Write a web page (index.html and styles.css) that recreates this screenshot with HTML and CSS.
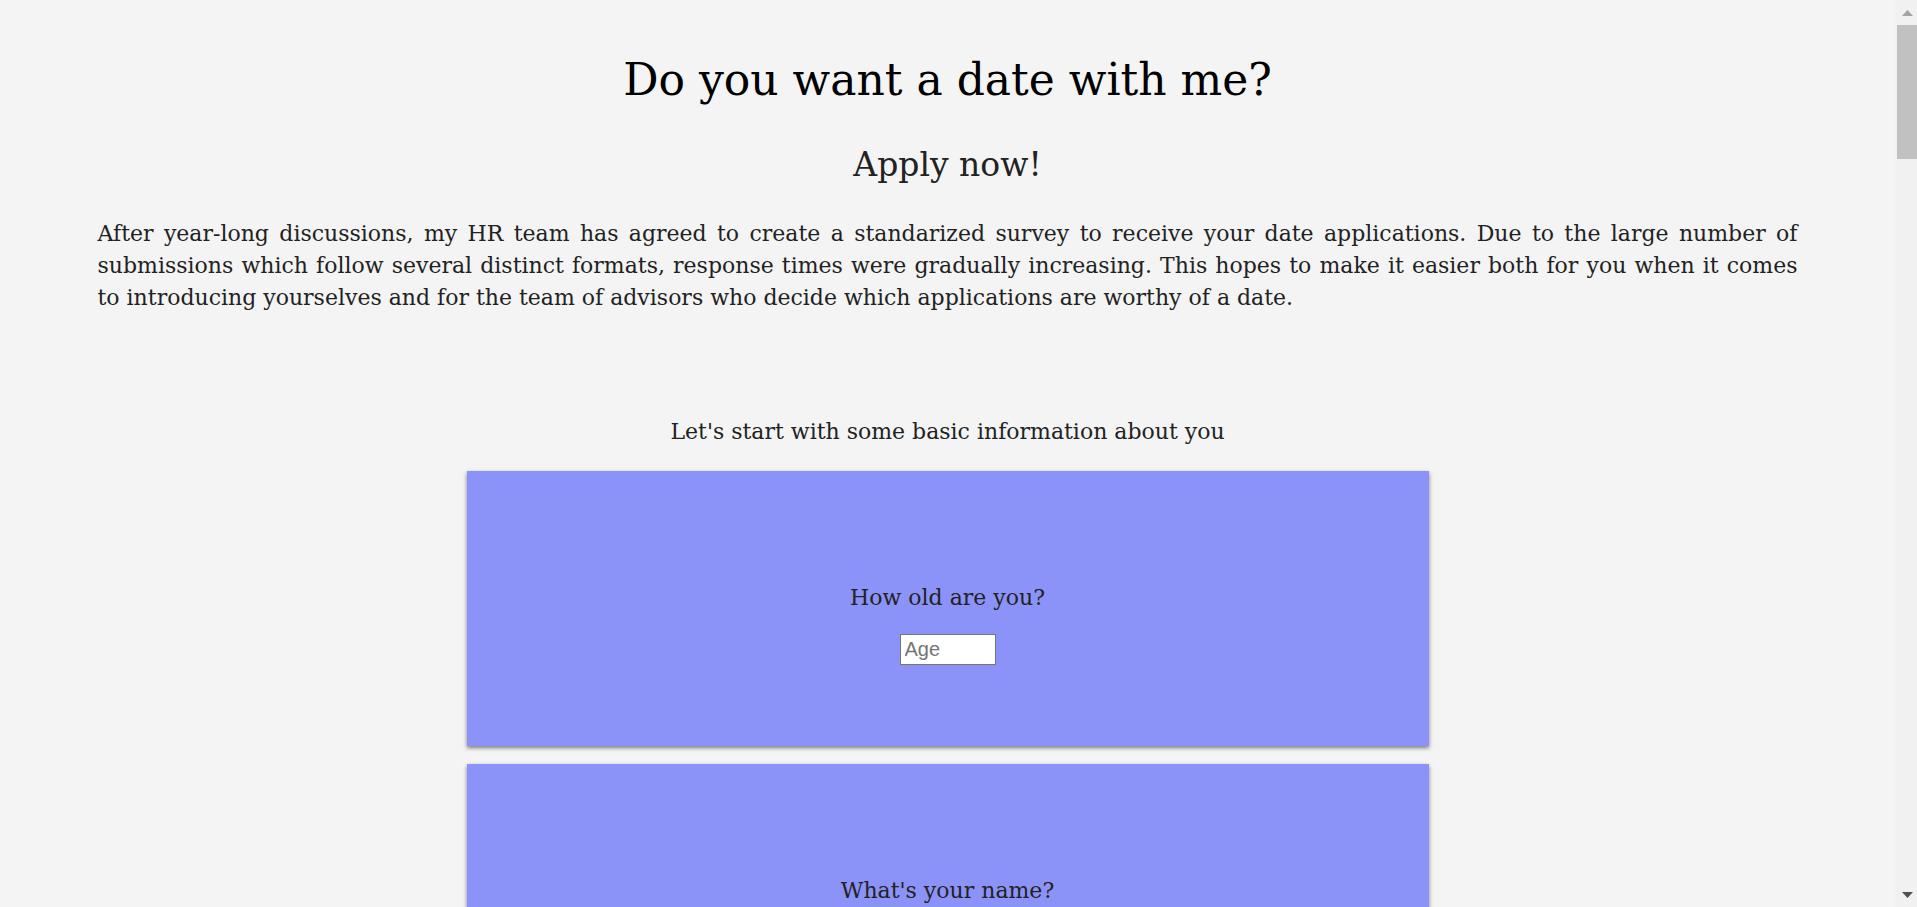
FILE: index.html
```html
<!DOCTYPE html>
<html lang="en">
<head>
<meta charset="utf-8">
<title>Do you want a date with me?</title>
<link rel="stylesheet" href="styles.css">
</head>
<body>
<div class="window">
  <div class="page">
    <header class="hero">
      <h1 class="title">Do you want a date with me?</h1>
      <h2 class="subtitle">Apply now!</h2>
      <p class="intro">After year-long discussions, my HR team has agreed to create a standarized survey to receive your date applications. Due to the large number of submissions which follow several distinct formats, response times were gradually increasing. This hopes to make it easier both for you when it comes to introducing yourselves and for the team of advisors who decide which applications are worthy of a date.</p>
    </header>
    <main class="survey">
      <p class="lead">Let's start with some basic information about you</p>
      <form class="questions">
        <div class="card"><label class="card-label" for="q1">How old are you?</label><input class="card-input" id="q1" type="text" placeholder="Age"></div>
        <div class="card"><label class="card-label" for="q2">What's your name?</label><input class="card-input" id="q2" type="text" placeholder="Name"></div>
        <div class="card"><label class="card-label" for="q3">Where do you live?</label><input class="card-input" id="q3" type="text" placeholder="City"></div>
        <div class="card"><label class="card-label" for="q4">How tall are you?</label><input class="card-input" id="q4" type="text" placeholder="Height"></div>
        <div class="card"><label class="card-label" for="q5">What do you do for a living?</label><input class="card-input" id="q5" type="text" placeholder="Job"></div>
        <div class="card"><label class="card-label" for="q6">What's your favourite food?</label><input class="card-input" id="q6" type="text" placeholder="Food"></div>
        <div class="card"><label class="card-label" for="q7">What's your favourite movie?</label><input class="card-input" id="q7" type="text" placeholder="Movie"></div>
        <div class="card"><label class="card-label" for="q8">What music do you listen to?</label><input class="card-input" id="q8" type="text" placeholder="Music"></div>
        <div class="card"><label class="card-label" for="q9">Do you have any pets?</label><input class="card-input" id="q9" type="text" placeholder="Pets"></div>
        <div class="card"><label class="card-label" for="q10">What are your hobbies?</label><input class="card-input" id="q10" type="text" placeholder="Hobbies"></div>
        <div class="card"><label class="card-label" for="q11">What's your star sign?</label><input class="card-input" id="q11" type="text" placeholder="Sign"></div>
        <div class="card"><label class="card-label" for="q12">Coffee or tea?</label><input class="card-input" id="q12" type="text" placeholder="Drink"></div>
        <div class="card"><label class="card-label" for="q13">Mountains or beach?</label><input class="card-input" id="q13" type="text" placeholder="Place"></div>
        <div class="card"><label class="card-label" for="q14">What's your dream destination?</label><input class="card-input" id="q14" type="text" placeholder="Country"></div>
        <div class="card"><label class="card-label" for="q15">What's your ideal first date?</label><input class="card-input" id="q15" type="text" placeholder="Date"></div>
        <div class="card"><label class="card-label" for="q16">What day are you free?</label><input class="card-input" id="q16" type="text" placeholder="Day"></div>
        <div class="card"><label class="card-label" for="q17">Why should I pick you?</label><input class="card-input" id="q17" type="text" placeholder="Reason"></div>
        <div class="card"><label class="card-label" for="q18">How can I contact you?</label><input class="card-input" id="q18" type="text" placeholder="Phone"></div>
      </form>
      <button class="submit" type="button">Send application</button>
    </main>
  </div>
  <div class="scrollbar" aria-hidden="true">
    <div class="sb-button">
      <svg width="11" height="6" viewBox="0 0 11 6"><path d="M5.5 0 L11 6 H0 Z" fill="#a3a3a3"/></svg>
    </div>
    <div class="sb-thumb"></div>
    <div class="sb-track"></div>
    <div class="sb-button">
      <svg width="11" height="6" viewBox="0 0 11 6"><path d="M0 0 H11 L5.5 6 Z" fill="#505050"/></svg>
    </div>
  </div>
</div>
</body>
</html>
```

FILE: styles.css
```css
* {
  box-sizing: border-box;
}

body {
  margin: 0;
  background: #f4f4f4;
  color: #222;
  font-family: "DejaVu Serif", "Liberation Serif", serif;
}

.window {
  display: grid;
  grid-template-columns: 1fr 22px;
  height: 100vh;
}

.page {
  min-width: 0;
  overflow-y: auto;
  scrollbar-width: none;
}

.page::-webkit-scrollbar {
  display: none;
}

.scrollbar {
  display: flex;
  flex-direction: column;
  padding-left: 2px;
  background: #f1f1f1;
}

.sb-button {
  display: flex;
  align-items: center;
  justify-content: center;
  height: 25px;
  flex: none;
}

.sb-button svg {
  display: block;
}

.sb-thumb {
  flex: none;
  height: 134px;
  background: #c1c1c1;
}

.sb-track {
  flex: 1;
}

.hero {
  display: flex;
  flex-direction: column;
  align-items: center;
}

.title {
  margin: 52px 0 0;
  font-size: 44px;
  line-height: 56px;
  font-weight: normal;
  color: #000;
}

.subtitle {
  margin: 35px 0 0;
  font-size: 33px;
  line-height: 44px;
  font-weight: normal;
}

.intro {
  width: 1700px;
  margin: 31px 0 0;
  font-size: 22px;
  line-height: 32px;
  text-align: justify;
}

.survey {
  display: flex;
  flex-direction: column;
  align-items: center;
  margin-top: 102px;
  padding-bottom: 30px;
}

.lead {
  margin: 0;
  font-size: 22px;
  line-height: 32px;
}

.questions {
  display: flex;
  flex-direction: column;
  gap: 18px;
  width: 962px;
  margin-top: 23px;
}

.card {
  display: flex;
  flex-direction: column;
  align-items: center;
  gap: 20px;
  height: 275px;
  padding-top: 111px;
  background: #8c93f8;
  box-shadow: 0 2px 4px rgba(0, 0, 0, 0.5);
}

.card-label {
  font-size: 22px;
  line-height: 32px;
}

.card-input {
  width: 96px;
  height: 31px;
  padding: 0 4px;
  border: 1px solid #767676;
  background: #fff;
  font-family: "Liberation Sans", Arial, sans-serif;
  font-size: 20px;
}

.card-input::placeholder {
  color: #757575;
}

.submit {
  margin-top: 40px;
  height: 50px;
  padding: 0 30px;
  border: none;
  background: #8c93f8;
  box-shadow: 0 2px 4px rgba(0, 0, 0, 0.5);
  font-family: "DejaVu Serif", serif;
  font-size: 22px;
  color: #222;
}
```
